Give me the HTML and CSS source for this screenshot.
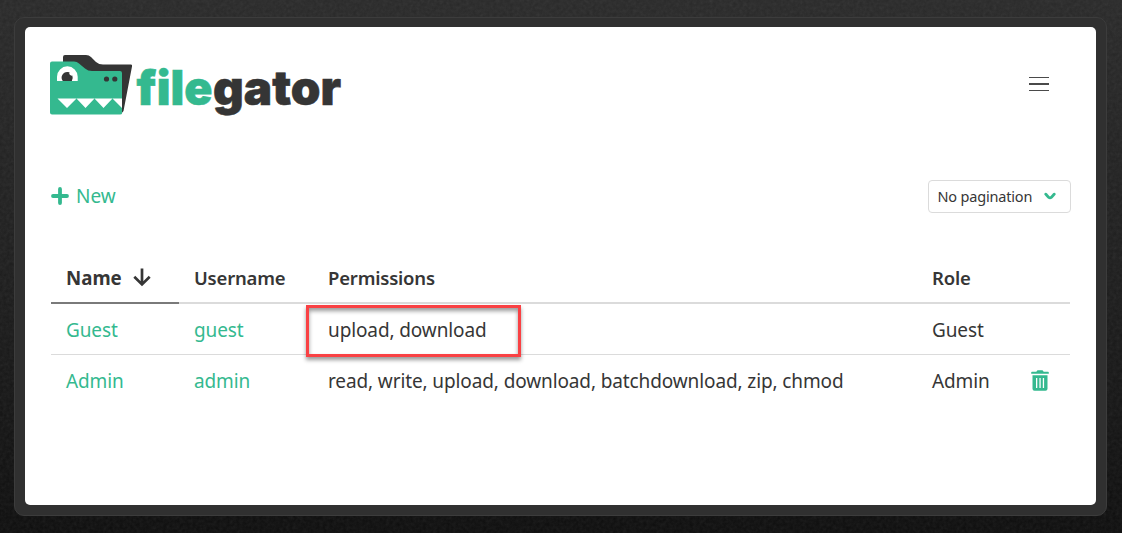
FILE: index.html
```html
<!DOCTYPE html>
<html lang="en">
<head>
<meta charset="utf-8">
<title>FileGator</title>
<link rel="stylesheet" href="styles.css">
</head>
<body>
<svg class="grain" aria-hidden="true"><filter id="noise"><feTurbulence type="fractalNoise" baseFrequency="0.3" numOctaves="2"/></filter><rect width="100%" height="100%" filter="url(#noise)"/></svg>
<div class="frame">
<main class="page">
  <header class="top">
    <svg class="logo" viewBox="0 0 292 62" width="292" height="62" role="img" aria-label="filegator">
      <path fill="#353535" d="M13 9V3q0-2 2-2h21q3 0 5 2l5 5q3 2.500 7 2.500h28q1.500 0 1 2L73.500 57 71 60V25H37L13 14z"/>
      <path fill="#34b98f" d="M2 7.500h22q3 0 5 2l6 5q3 2.500 7 2.500h28q2 0 2 2V59q0 1.500-2 1.500H2q-2 0-2-2v-49q0-2 2-2z"/>
      <path fill="#fff" d="M7 27V22.700a10.350 10.350 0 0 1 20.700 0V27z"/>
      <path fill="#353535" d="M12.800 27a5.600 5.600 0 0 1 4.700-9q1.500 0 2 .3a2.300 2.300 0 0 0 2.800 3.200q1.200 3-.5 5.500z"/>
      <circle cx="56.500" cy="25" r="2.600" fill="#353535"/><circle cx="64.800" cy="25" r="2.600" fill="#353535"/>
      <path fill="#fff" d="M7.500 44.500H72V54l-9.500-9.500-9 9.500-9-9.500-9 9.500-9-9.500-9.500 9.500z"/>
      <text class="wordmark file" x="86.500" y="51.300" textLength="76" lengthAdjust="spacingAndGlyphs">file</text>
      <text class="wordmark gator" x="163" y="51.300" textLength="128" lengthAdjust="spacingAndGlyphs">gator</text>
    </svg>
    <div class="burger"><span></span><span></span><span></span></div>
  </header>
  <div class="toolbar">
    <a class="new"><svg width="18" height="18" viewBox="0 0 18 18"><path d="M9 2v14M2 9h14" stroke="currentColor" stroke-width="3.800" stroke-linecap="round"/></svg><span>New</span></a>
    <div class="select"><span>No pagination</span><svg width="12" height="9" viewBox="0 0 12 9"><path d="M1.800 2.200Q4.500 5.900 6 5.900t4.200-3.700" fill="none" stroke="#34b98f" stroke-width="2.800" stroke-linecap="round"/></svg></div>
  </div>
  <section class="table">
    <div class="row head">
      <div class="cell sorted"><span>Name</span><svg width="20" height="20" viewBox="0 0 20 20"><path d="M10 .5v16M2.300 8.800l7.700 7.600 7.700-7.600" fill="none" stroke="#363636" stroke-width="2.700"/></svg></div>
      <div class="cell">Username</div><div class="cell">Permissions</div><div class="cell">Role</div><div class="cell"></div>
    </div>
    <div class="row first">
      <div class="cell"><a>Guest</a></div><div class="cell"><a>guest</a></div><div class="cell marked">upload, download</div><div class="cell">Guest</div><div class="cell"></div>
    </div>
    <div class="row">
      <div class="cell"><a>Admin</a></div><div class="cell"><a>admin</a></div><div class="cell">read, write, upload, download, batchdownload, zip, chmod</div><div class="cell">Admin</div>
      <div class="cell"><svg class="trash" width="18" height="21" viewBox="0 0 18 21"><path fill="#34b98f" fill-rule="evenodd" d="M6.500.3h5l1.200 1.400H17q.8 0 .8.8v1.200H.2V2.500q0-.8.800-.8h4.300zM1.500 5.300h15v13.500q0 2-2 2h-11q-2 0-2-2zM5 8v10h1.300V8zm3.400 0v10h1.300V8zm3.400 0v10h1.300V8z"/></svg></div>
    </div>
  </section>
</main>
</div>
</body>
</html>
```
FILE: styles.css
```css
*, *::after { box-sizing: border-box; }
body {
  margin: 0;
  height: 533px;
  padding: 17px 15px 17px 14px;
  overflow: hidden;
  background: linear-gradient(#292929, #1d1d1d 50%, #0d0d0d);
  font-family: "Noto Sans", "Open Sans", sans-serif;
  color: #363636;
}
.grain { position: absolute; top: 0; left: 0; width: 1122px; height: 533px; opacity: .09; filter: grayscale(1); }
.frame {
  position: relative;
  height: 499px;
  padding: 9px 10px;
  background: #303030;
  border: 1px solid #3c3c3c;
  border-radius: 10px;
}
.page { height: 478px; padding: 27px 25px; background: #fff; border-radius: 5px; }
.top { display: flex; justify-content: space-between; height: 126px; }
.logo { display: block; overflow: visible; }
.wordmark { font: 900 47.500px Inter, sans-serif; stroke-width: .6px; }
.file { fill: #34b98f; stroke: #34b98f; }
.gator { fill: #353535; stroke: #353535; }
.burger { display: flex; flex-direction: column; gap: 5px; width: 20px; margin: 23px 22px 0 0; }
.burger span { height: 1px; background: #4a4a4a; }
.burger span:nth-child(2) { height: 2px; }
.toolbar { display: flex; justify-content: space-between; align-items: center; height: 33px; }
.new { display: flex; align-items: center; gap: 7px; margin-left: 1px; padding-bottom: 2px; color: #34b98f; font-size: 19px; }
.select {
  display: flex; align-items: center; justify-content: space-between;
  width: 143px; height: 33px; padding: 0 14px 0 8.500px;
  border: 1px solid #dbdbdb; border-radius: 4px; font-size: 14.500px; letter-spacing: -.18px;
}
.select span { padding-bottom: 1px; }
.table { margin: 40px 1px 0; font-size: 19px; letter-spacing: -.115px; }
.row { display: grid; grid-template-columns: 128px 134px 604px 98px 55px; height: 51px; }
.cell { display: flex; align-items: center; padding-left: 15px; white-space: nowrap; }
.cell a { color: #34b98f; }
.trash { margin-left: 1px; }
.head .cell { border-bottom: 2px solid #dbdbdb; font-weight: 600; font-size: 18.500px; letter-spacing: -.2px; }
.head .sorted { gap: 10px; border-color: #7a7a7a; font-weight: 700; font-size: 18.700px; letter-spacing: 0; }
.first .cell { padding-top: 2px; border-bottom: 1px solid #dbdbdb; }
.marked { position: relative; }
.marked::after {
  content: ""; position: absolute; left: -7px; top: 1px; width: 215px; height: 52px;
  border: 3px solid #f94144;
  box-shadow: 0 3px 4px rgba(0,0,0,.4), inset 0 3px 4px rgba(0,0,0,.4);
}
```
